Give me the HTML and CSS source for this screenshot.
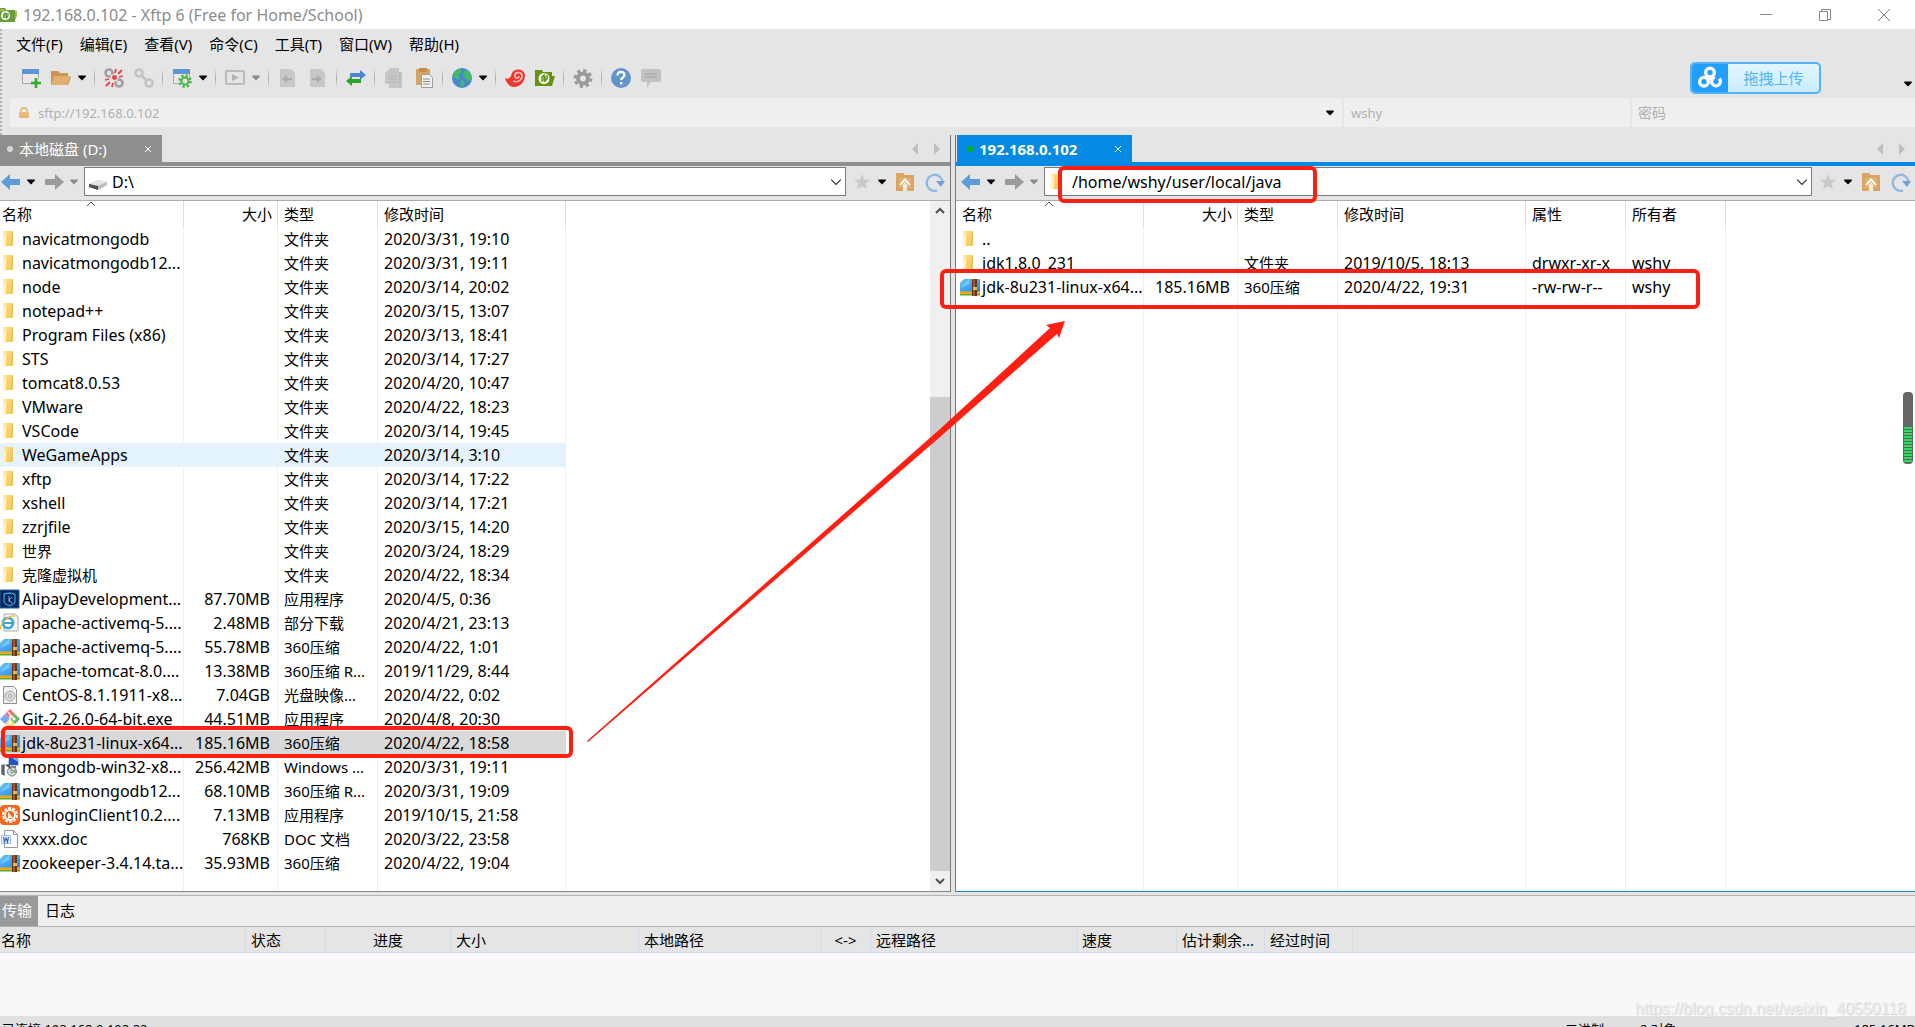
FILE: index.html
```html
<!DOCTYPE html>
<html lang="zh-CN">
<head>
<meta charset="utf-8">
<title>192.168.0.102 - Xftp 6</title>
<link rel="stylesheet" href="styles.css">
</head>
<body>
<svg class="defs" aria-hidden="true">
  <defs>
    <linearGradient id="gold" x1="0" x2="1" y1="0" y2="1"><stop offset="0" stop-color="#ffe08a"/><stop offset="1" stop-color="#f0c655"/></linearGradient>
    <linearGradient id="sky" x1="0" x2="1" y1="0" y2="1"><stop offset="0" stop-color="#6cc5fa"/><stop offset="1" stop-color="#1f87dd"/></linearGradient>
    <symbol id="i-folder" viewBox="0 0 20 20"><path d="M3 2h10v15H6z" fill="url(#gold)"/><path d="M12 3h1v13h-2z" fill="#e9c35c"/><path d="M3 2l3 3v13l-3-1.500z" fill="#fff0bd"/></symbol>
    <symbol id="i-zip" viewBox="0 0 20 20"><path d="M0 16h20v2.500H0z" fill="#58ad1e"/><path d="M0 14h20v3H0z" fill="#f4a91c"/><path d="M0 6l4-4h5l3 0 8 0v12.500H0z" fill="url(#sky)"/><path d="M0 11L9 2v5z" fill="#9adcff" opacity=".6"/><path d="M12 2h5v17h-5z" fill="#6b3216"/><path d="M13.500 2h1v17h-1z" fill="#c98b3a"/><path d="M13 10h4v3h-4z" fill="#e8b45a"/></symbol>
    <symbol id="i-alipay" viewBox="0 0 20 20"><path d="M0 1h19v18H0z" fill="#0b2550"/><path d="M0 1h19v18H0z" fill="none" stroke="#0e63b5"/><path d="M4 5l5.500-1L15 5v7c0 2-3 4-5.500 5C7 16 4 14 4 12z" fill="none" stroke="#2c9be8" stroke-width="1.300"/><path d="M9 7v6m3-5l-3 3 3 3" stroke="#5fc0ff" fill="none"/></symbol>
    <symbol id="i-ie" viewBox="0 0 20 20"><path d="M4 1h11l3 3v14H4z" fill="#f4f4f4" stroke="#aaa"/><circle cx="8" cy="10" r="5" fill="#fff" stroke="#3aa3e0" stroke-width="2.600"/><path d="M4 10h9" stroke="#3aa3e0" stroke-width="2"/><path d="M1 16C-1 12 8 2 15 3" fill="none" stroke="#f2b92e" stroke-width="1.400"/></symbol>
    <symbol id="i-iso" viewBox="0 0 20 20"><path d="M3.500 1.500h10l3 3v14h-13z" fill="#f1f1f1" stroke="#8f8f8f"/><circle cx="10" cy="11" r="5" fill="#d8d8d8" stroke="#aaa"/><circle cx="10" cy="11" r="1.500" fill="#fff" stroke="#999"/></symbol>
    <symbol id="i-git" viewBox="0 0 20 20"><path d="M10 0l5 5-5 5-5-5z" fill="#f0736b"/><path d="M5 5l5 5-5 5-5-5z" fill="#7da7f0"/><path d="M15 5l5 5-5 5-5-5z" fill="#67ba62"/><path d="M10 10l5 5-5 4-5-4z" fill="#f6dd79"/><path d="M8 3l6 7M10 6v8" stroke="#fff" stroke-width="1.300"/><circle cx="14" cy="10" r="1.500" fill="#fff"/><circle cx="10" cy="14" r="1.500" fill="#fff"/></symbol>
    <symbol id="i-msi" viewBox="0 0 20 20"><path d="M1 8l4-1v12l-4-2z" fill="#8e949b"/><path d="M3 8v10" stroke="#333"/><path d="M8 0h11v9H8z" fill="#ccd"/><path d="M9 1h9v7H9z" fill="#1a56c4"/><path d="M12 1h6v4z" fill="#68b6f5"/><path d="M11 9h5v2h-5z" fill="#777"/><circle cx="12" cy="14.500" r="4.500" fill="#cfe0dc" stroke="#778"/><path d="M12 14.500l4-3v5z" fill="#84ad6e"/><circle cx="12" cy="14.500" r="1.300" fill="#fff" stroke="#778"/><path d="M5 8l7 5-3-6z" fill="#555"/></symbol>
    <symbol id="i-sun" viewBox="0 0 20 20"><rect y="0" width="20" height="20" rx="4" fill="#f4681d"/><circle cx="10" cy="10" r="7" fill="none" stroke="#fff" stroke-width="2" stroke-dasharray="3 1.400"/><circle cx="10" cy="10" r="5" fill="none" stroke="#fff" stroke-width="1.800"/><path d="M8 7l5 6-3 0-2 1z" fill="#fff"/></symbol>
    <symbol id="i-doc" viewBox="0 0 20 20"><path d="M4.500 1.500h9l4 4v13h-13z" fill="#fff" stroke="#999"/><path d="M13.500 1.500v4h4" fill="none" stroke="#999"/><path d="M1.500 6.500h9v8h-9z" fill="#e9f1fc" stroke="#9dbdf0"/><path d="M3.500 8l1 5 1.500-4 1.500 4 1-5" fill="none" stroke="#2f66c4" stroke-width="1.200"/></symbol>
    <symbol id="i-back" viewBox="0 0 20 20"><path d="M0 10l9-8v5h10v6H9v5z" fill="#5b9dd8"/></symbol>
    <symbol id="i-fwd" viewBox="0 0 20 20"><path d="M20 10l-9-8v5H1v6h10v5z" fill="#9b9b9b"/></symbol>
    <symbol id="i-caret" viewBox="0 0 8 8"><path d="M1 2h6v1H7L4 6 1 3z" fill="currentColor"/></symbol>
    <symbol id="i-star" viewBox="0 0 20 20"><path d="M10 2l2.200 5.500 5.800.4-4.500 3.700 1.500 5.700-5-3.200-5 3.200 1.500-5.700L2 7.900l5.800-.4z" fill="#c9c9c9"/></symbol>
    <symbol id="i-up" viewBox="0 0 20 20"><path d="M1 1h7l2 2h9v16H1z" fill="#dba560"/><path d="M4 6h12v10H4z" fill="#dfb27a"/><path d="M10 6l6 7h-2l-4-4-4 4H4z" fill="#fff"/><path d="M10 10l3 4h-1v5H8v-5H7z" fill="#f7ead8"/></symbol>
    <symbol id="i-refresh" viewBox="0 0 20 20"><path d="M12 18.500A8 8 0 1 1 17.500 9" fill="none" stroke="#8fb9e2" stroke-width="2.400"/><path d="M11 9h9l-4 6z" fill="#6ba3d8"/></symbol>
    <symbol id="i-chev" viewBox="0 0 10 10"><path d="M1 3l4 4 4-4" fill="none" stroke="#333"/></symbol>
    <symbol id="i-sort" viewBox="0 0 10 6"><path d="M1 5l4-4 4 4" fill="none" stroke="#555"/></symbol>
    <symbol id="i-x" viewBox="0 0 8 8"><path d="M1 1l6 6M7 1L1 7" fill="none" stroke="#fff"/></symbol>
  </defs>
</svg>

<header class="titlebar">
  <svg class="logo" viewBox="0 0 18 16"><path d="M0 1h5l1 2h9v12H0z" fill="#6c9f3a"/><path d="M0 2h4v2H0z" fill="#93c05e"/><path d="M15 4h2v5l-2 4z" fill="#8fbf60"/><circle cx="5.500" cy="8.500" r="4.500" fill="#fff"/><path d="M3.500 11V8l1.500-2v5m1.500-5v5L8 9V6" fill="none" stroke="#5d9131" stroke-width="1.200"/></svg>
  <h1>192.168.0.102 - Xftp 6 (Free for Home/School)</h1>
  <div class="wincontrols">
    <button aria-label="最小化"><svg viewBox="0 0 12 12"><path d="M0 5.500h12"/></svg></button>
    <button aria-label="还原"><svg viewBox="0 0 12 12"><path d="M.5 2.500h8v9h-8zM2.500 2V.5h9v10H9"/></svg></button>
    <button aria-label="关闭"><svg viewBox="0 0 12 12"><path d="M0 0l12 12M12 0L0 12"/></svg></button>
  </div>
</header>

<div class="chrome">
  <nav class="menu">
    <button>文件(F)</button><button>编辑(E)</button><button>查看(V)</button><button>命令(C)</button><button>工具(T)</button><button>窗口(W)</button><button>帮助(H)</button>
  </nav>
  <div class="toolbar">
    <button aria-label="新建"><svg viewBox="0 0 20 20"><path d="M1.500 1.500h16v14h-16z" fill="#e9e9e9" stroke="#a9a9a9"/><path d="M1 1h17v5H1z" fill="#5c95d2"/><path d="M15 10v10M10 15h10" stroke="#e5e5e5" stroke-width="5"/><path d="M15 10v10M10 15h10" stroke="#2daf2a" stroke-width="2.600"/></svg></button>
    <button aria-label="打开"><svg viewBox="0 0 20 20"><path d="M0 3h7l2 2h8v4h3l-3 8H0z" fill="#c99557"/><path d="M3 8h17l-4 9H0z" fill="#dfae70"/></svg></button>
    <button class="drop" aria-label="打开列表"><svg><use href="#i-caret"/></svg></button><i class="sep tight"></i>
    <button aria-label="断开"><svg viewBox="0 0 20 20"><circle cx="5" cy="5" r="3.500" fill="none" stroke="#a0a0a0" stroke-width="2.600"/><circle cx="15" cy="15" r="3.500" fill="none" stroke="#a0a0a0" stroke-width="2.600"/><path d="M7 7l6 6" stroke="#ddd" stroke-width="3"/><path d="M12 1l-1 4M18 2l-4 4M19 8l-4 1M1 12l4-1M2 18l4-4M8 19l1-4" stroke="#ee3f49" stroke-width="1.800"/><circle cx="10.500" cy="9.500" r="2.400" fill="#ee3f49"/></svg></button>
    <button aria-label="连接"><svg viewBox="0 0 20 20" fill="none" stroke="#c2c2c2" stroke-width="2.600"><circle cx="5" cy="5" r="3.500"/><circle cx="15" cy="15" r="3.500"/><path d="M7 7l6 6"/></svg></button><i class="sep"></i>
    <button aria-label="属性"><svg viewBox="0 0 20 20"><path d="M1.500 1.500h16v14h-16z" fill="#e9e9e9" stroke="#a9a9a9"/><path d="M1 1h17v5H1z" fill="#5c95d2"/><circle cx="13" cy="13" r="6" fill="#e5e5e5"/><circle cx="13" cy="13" r="5.500" fill="none" stroke="#4bb648" stroke-width="2.600" stroke-dasharray="2.300 2"/><circle cx="13" cy="13" r="3.500" fill="none" stroke="#4bb648" stroke-width="2"/></svg></button>
    <button class="drop" aria-label="属性列表"><svg><use href="#i-caret"/></svg></button><i class="sep tight"></i>
    <button aria-label="播放"><svg viewBox="0 0 20 20"><rect x="1" y="3" width="18" height="13" rx="1" fill="none" stroke="#bababa" stroke-width="2"/><path d="M7 6l7 3.500L7 13z" fill="#b3b3b3"/></svg></button>
    <button class="drop dim" aria-label="播放列表"><svg><use href="#i-caret"/></svg></button><i class="sep tight"></i>
    <button aria-label="传入"><svg viewBox="0 0 20 20"><path d="M2 1h11l4 4v14H2z" fill="#c8c8c8"/><path d="M4 11l5-4v3h5v2H9v3z" fill="#acacac"/></svg></button>
    <button aria-label="传出"><svg viewBox="0 0 20 20"><path d="M2 1h11l4 4v14H2z" fill="#c8c8c8"/><path d="M14 11L9 7v3H4v2h5v3z" fill="#acacac"/></svg></button><i class="sep"></i>
    <button aria-label="同步"><svg viewBox="0 0 20 20"><path d="M20 7l-6-5v3H4v4h10v3z" fill="#4c87d0"/><path d="M0 13l6-5v3h9v4H6v3z" fill="#2ba32a"/></svg></button><i class="sep"></i>
    <button aria-label="复制"><svg viewBox="0 0 20 20"><path d="M6 0h9v4h3v16H5v-4H1V5z" fill="#c6c6c6"/><path d="M4 8h9M4 11h9M4 14h9M16 5v12" stroke="#b3b3b3"/></svg></button>
    <button aria-label="粘贴"><svg viewBox="0 0 20 20"><path d="M2 1h14v16H2z" fill="#d5a568"/><path d="M5 0h8v4H5z" fill="#c98c44"/><path d="M7.500 6.500h8l3 3v10h-11z" fill="#f0f0f0" stroke="#9d9d9d"/><path d="M9 11h7M9 13.500h7M9 16h7" stroke="#8f8f8f"/></svg></button><i class="sep"></i>
    <button aria-label="浏览器"><svg viewBox="0 0 20 20"><circle cx="10" cy="10" r="10" fill="#4788cc"/><path d="M2 4c3-3 7-4 8-3l-1 4-3 2 2 3-2 2-4-3zM12 3l5 0 3 7-4 4-3-4-2-3zM9 12l4 2-2 5-3-2z" fill="#43b96a"/></svg></button>
    <button class="drop" aria-label="浏览器列表"><svg><use href="#i-caret"/></svg></button><i class="sep tight"></i>
    <button aria-label="Xshell"><svg viewBox="0 0 20 20"><path d="M0 10c4 2 6-1 7-5 2-5 12-5 13 2 0 7-5 12-11 12C4 19 1 14 0 10z" fill="#f0372f"/><path d="M8 13c5 2 9-1 9-5s-6-5-7-1 4 4 4 1" fill="none" stroke="#f6d7d5" stroke-width="1.400"/></svg></button>
    <button aria-label="Xftp"><svg viewBox="0 0 20 20"><path d="M0 2h7l1 2h9v4h3l-3 10H0z" fill="#62940f"/><circle cx="9" cy="10.500" r="5.500" fill="#fff"/><path d="M7 14v-5l2-2v6m1-5v5l2-2V7" fill="none" stroke="#62940f" stroke-width="1.500"/></svg></button><i class="sep"></i>
    <button aria-label="设置"><svg viewBox="0 0 20 20" fill="none" stroke="#9a9a9a"><circle cx="10" cy="10.500" r="8" stroke-width="3" stroke-dasharray="3.300 2.980"/><circle cx="10" cy="10.500" r="5" stroke-width="4"/></svg></button><i class="sep"></i>
    <button aria-label="帮助"><svg viewBox="0 0 20 20"><circle cx="10" cy="10" r="10" fill="#6094cd"/><path d="M6.500 7.500c0-5 7-4.500 7-.5 0 2.500-3.300 2.500-3.300 5M10.200 14v2.500" fill="none" stroke="#fff" stroke-width="2.300"/></svg></button>
    <button aria-label="反馈"><svg viewBox="0 0 20 20"><path d="M2 1h16q2 0 2 2v9q0 2-2 2h-8l-4 6v-6H2q-2 0-2-2V3q0-2 2-2z" fill="#c2c2c2"/><path d="M4 6h12M4 9h12" stroke="#adadad" stroke-width="1.300"/></svg></button>
    <button class="upload"><span><svg viewBox="0 0 22 22" fill="none" stroke="#fff" stroke-width="3"><circle cx="11" cy="6" r="4"/><circle cx="5.500" cy="14.500" r="4"/><path d="M19.500 11.500a4 4 0 1 1-6 0L9 11"/></svg></span><b>拖拽上传</b></button>
    <button class="drop more" aria-label="更多"><svg><use href="#i-caret"/></svg></button>
  </div>
  <div class="address">
    <div class="field url">
      <svg class="lock" viewBox="0 0 12 12"><path d="M3 6V3q0-2 3-2t3 2v3" fill="none" stroke="#e6b877" stroke-width="1.800"/><rect x="1" y="5" width="10" height="6" rx="1" fill="#e6b877"/></svg>
      <input type="text" aria-label="地址" value="sftp://192.168.0.102">
      <button class="drop" aria-label="地址列表"><svg><use href="#i-caret"/></svg></button>
    </div>
    <input class="field user" type="text" aria-label="用户名" value="wshy">
    <input class="field pass" type="password" aria-label="密码" placeholder="密码">
  </div>
</div>

<main class="panes">
  <section class="pane local">
    <div class="tabs">
      <button class="tab"><i class="dot"></i><span>本地磁盘 (D:)</span><svg><use href="#i-x"/></svg></button>
      <div class="pager"><svg viewBox="0 0 8 12"><path d="M7 0v12L1 6z"/></svg><svg viewBox="0 0 8 12"><path d="M1 0v12l6-6z"/></svg></div>
    </div>
    <div class="pathbar">
      <button class="ico" aria-label="后退"><svg><use href="#i-back"/></svg></button><button class="drop" aria-label="后退列表"><svg><use href="#i-caret"/></svg></button>
      <button class="ico" aria-label="前进"><svg><use href="#i-fwd"/></svg></button><button class="drop dim" aria-label="前进列表"><svg><use href="#i-caret"/></svg></button>
      <div class="path">
        <svg class="pathicon" viewBox="0 0 20 20"><path d="M1 12l9-4 9 2v3l-9 5-9-3z" fill="#b9bcbe"/><path d="M1 12l9-4 9 2-9 4z" fill="#e3e5e6"/><path d="M1 12l9 2v4l-9-3z" fill="#4d5458"/></svg>
        <input type="text" aria-label="本地路径" value="D:\">
        <button aria-label="路径列表"><svg><use href="#i-chev"/></svg></button>
      </div>
      <button class="ico fav" aria-label="收藏"><svg><use href="#i-star"/></svg></button><button class="drop" aria-label="收藏列表"><svg><use href="#i-caret"/></svg></button>
      <button class="ico up" aria-label="上一级"><svg><use href="#i-up"/></svg></button>
      <button class="ico re" aria-label="刷新"><svg><use href="#i-refresh"/></svg></button>
    </div>
    <div class="list">
      <div class="lines"><i></i><i></i><i></i><i></i></div>
      <table>
        <colgroup><col class="c-name"><col class="c-size"><col class="c-type"><col class="c-date"></colgroup>
        <thead><tr><th>名称<svg class="sort"><use href="#i-sort"/></svg></th><th>大小</th><th>类型</th><th>修改时间</th></tr></thead>
        <tbody>
          <tr><td><svg><use href="#i-folder"/></svg>navicatmongodb</td><td></td><td>文件夹</td><td>2020/3/31, 19:10</td></tr>
          <tr><td><svg><use href="#i-folder"/></svg>navicatmongodb12...</td><td></td><td>文件夹</td><td>2020/3/31, 19:11</td></tr>
          <tr><td><svg><use href="#i-folder"/></svg>node</td><td></td><td>文件夹</td><td>2020/3/14, 20:02</td></tr>
          <tr><td><svg><use href="#i-folder"/></svg>notepad++</td><td></td><td>文件夹</td><td>2020/3/15, 13:07</td></tr>
          <tr><td><svg><use href="#i-folder"/></svg>Program Files (x86)</td><td></td><td>文件夹</td><td>2020/3/13, 18:41</td></tr>
          <tr><td><svg><use href="#i-folder"/></svg>STS</td><td></td><td>文件夹</td><td>2020/3/14, 17:27</td></tr>
          <tr><td><svg><use href="#i-folder"/></svg>tomcat8.0.53</td><td></td><td>文件夹</td><td>2020/4/20, 10:47</td></tr>
          <tr><td><svg><use href="#i-folder"/></svg>VMware</td><td></td><td>文件夹</td><td>2020/4/22, 18:23</td></tr>
          <tr><td><svg><use href="#i-folder"/></svg>VSCode</td><td></td><td>文件夹</td><td>2020/3/14, 19:45</td></tr>
          <tr class="hover"><td><svg><use href="#i-folder"/></svg>WeGameApps</td><td></td><td>文件夹</td><td>2020/3/14, 3:10</td></tr>
          <tr><td><svg><use href="#i-folder"/></svg>xftp</td><td></td><td>文件夹</td><td>2020/3/14, 17:22</td></tr>
          <tr><td><svg><use href="#i-folder"/></svg>xshell</td><td></td><td>文件夹</td><td>2020/3/14, 17:21</td></tr>
          <tr><td><svg><use href="#i-folder"/></svg>zzrjfile</td><td></td><td>文件夹</td><td>2020/3/15, 14:20</td></tr>
          <tr><td class="han"><svg><use href="#i-folder"/></svg>世界</td><td></td><td>文件夹</td><td>2020/3/24, 18:29</td></tr>
          <tr><td class="han"><svg><use href="#i-folder"/></svg>克隆虚拟机</td><td></td><td>文件夹</td><td>2020/4/22, 18:34</td></tr>
          <tr><td><svg><use href="#i-alipay"/></svg>AlipayDevelopment...</td><td>87.70MB</td><td>应用程序</td><td>2020/4/5, 0:36</td></tr>
          <tr><td><svg><use href="#i-ie"/></svg>apache-activemq-5....</td><td>2.48MB</td><td>部分下载</td><td>2020/4/21, 23:13</td></tr>
          <tr><td><svg><use href="#i-zip"/></svg>apache-activemq-5....</td><td>55.78MB</td><td>360压缩</td><td>2020/4/22, 1:01</td></tr>
          <tr><td><svg><use href="#i-zip"/></svg>apache-tomcat-8.0....</td><td>13.38MB</td><td>360压缩 R...</td><td>2019/11/29, 8:44</td></tr>
          <tr><td><svg><use href="#i-iso"/></svg>CentOS-8.1.1911-x8...</td><td>7.04GB</td><td>光盘映像...</td><td>2020/4/22, 0:02</td></tr>
          <tr><td><svg><use href="#i-git"/></svg>Git-2.26.0-64-bit.exe</td><td>44.51MB</td><td>应用程序</td><td>2020/4/8, 20:30</td></tr>
          <tr class="selected"><td><svg><use href="#i-zip"/></svg>jdk-8u231-linux-x64...</td><td>185.16MB</td><td>360压缩</td><td>2020/4/22, 18:58</td></tr>
          <tr><td><svg><use href="#i-msi"/></svg>mongodb-win32-x8...</td><td>256.42MB</td><td>Windows ...</td><td>2020/3/31, 19:11</td></tr>
          <tr><td><svg><use href="#i-zip"/></svg>navicatmongodb12...</td><td>68.10MB</td><td>360压缩 R...</td><td>2020/3/31, 19:09</td></tr>
          <tr><td><svg><use href="#i-sun"/></svg>SunloginClient10.2....</td><td>7.13MB</td><td>应用程序</td><td>2019/10/15, 21:58</td></tr>
          <tr><td><svg><use href="#i-doc"/></svg>xxxx.doc</td><td>768KB</td><td>DOC 文档</td><td>2020/3/22, 23:58</td></tr>
          <tr><td><svg><use href="#i-zip"/></svg>zookeeper-3.4.14.ta...</td><td>35.93MB</td><td>360压缩</td><td>2020/4/22, 19:04</td></tr>
        </tbody>
      </table>
      <div class="scrollbar">
        <svg viewBox="0 0 10 10"><path d="M1 7l4-4 4 4" fill="none" stroke="#505050" stroke-width="2"/></svg>
        <div class="track"><div class="thumb"></div></div>
        <svg viewBox="0 0 10 10"><path d="M1 3l4 4 4-4" fill="none" stroke="#505050" stroke-width="2"/></svg>
      </div>
    </div>
  </section>

  <section class="pane remote">
    <div class="tabs">
      <button class="tab"><i class="dot"></i><span>192.168.0.102</span><svg><use href="#i-x"/></svg></button>
      <div class="pager"><svg viewBox="0 0 8 12"><path d="M7 0v12L1 6z"/></svg><svg viewBox="0 0 8 12"><path d="M1 0v12l6-6z"/></svg></div>
    </div>
    <div class="pathbar">
      <button class="ico" aria-label="后退"><svg><use href="#i-back"/></svg></button><button class="drop" aria-label="后退列表"><svg><use href="#i-caret"/></svg></button>
      <button class="ico" aria-label="前进"><svg><use href="#i-fwd"/></svg></button><button class="drop dim" aria-label="前进列表"><svg><use href="#i-caret"/></svg></button>
      <div class="path">
        <svg class="pathicon"><use href="#i-folder"/></svg>
        <input type="text" aria-label="远程路径" value="/home/wshy/user/local/java">
        <button aria-label="路径列表"><svg><use href="#i-chev"/></svg></button>
      </div>
      <button class="ico fav" aria-label="收藏"><svg><use href="#i-star"/></svg></button><button class="drop" aria-label="收藏列表"><svg><use href="#i-caret"/></svg></button>
      <button class="ico up" aria-label="上一级"><svg><use href="#i-up"/></svg></button>
      <button class="ico re" aria-label="刷新"><svg><use href="#i-refresh"/></svg></button>
    </div>
    <div class="list">
      <div class="lines"><i></i><i></i><i></i><i></i><i></i><i></i></div>
      <table>
        <colgroup><col class="c-name"><col class="c-size"><col class="c-type"><col class="c-date"><col class="c-attr"><col class="c-attr"></colgroup>
        <thead><tr><th>名称<svg class="sort"><use href="#i-sort"/></svg></th><th>大小</th><th>类型</th><th>修改时间</th><th>属性</th><th>所有者</th></tr></thead>
        <tbody>
          <tr><td><svg><use href="#i-folder"/></svg>..</td><td></td><td></td><td></td><td></td><td></td></tr>
          <tr><td><svg><use href="#i-folder"/></svg>jdk1.8.0_231</td><td></td><td>文件夹</td><td>2019/10/5, 18:13</td><td>drwxr-xr-x</td><td>wshy</td></tr>
          <tr><td><svg><use href="#i-zip"/></svg>jdk-8u231-linux-x64...</td><td>185.16MB</td><td>360压缩</td><td>2020/4/22, 19:31</td><td>-rw-rw-r--</td><td>wshy</td></tr>
        </tbody>
      </table>
    </div>
  </section>
</main>

<section class="transfer">
  <div class="subtabs"><button class="on">传输</button><button>日志</button></div>
  <table>
    <colgroup><col class="t-name"><col class="t-state"><col class="t-prog"><col class="t-size"><col class="t-local"><col class="t-dir"><col class="t-remote"><col class="t-speed"><col class="t-left"><col class="t-left"><col></colgroup>
    <thead><tr><th>名称</th><th>状态</th><th class="mid">进度</th><th>大小</th><th>本地路径</th><th class="mid">&lt;-&gt;</th><th>远程路径</th><th>速度</th><th>估计剩余...</th><th>经过时间</th><th></th></tr></thead>
  </table>
  <div class="empty"></div>
</section>

<footer class="status"><span>已连接 192.168.0.102:22</span><span class="mode">二进制</span><span class="count">2 对象</span><span class="total">185.16MB</span></footer>

<div class="gauge"><i></i></div>
<div class="watermark">https://blog.csdn.net/weixin_40550118</div>
<svg class="marks" aria-hidden="true">
  <g fill="none" stroke="#fe1f12" stroke-width="4">
    <rect x="1060" y="168" width="255" height="33" rx="4"/>
    <rect x="942" y="271" width="756" height="36" rx="4"/>
    <rect x="3" y="728" width="568" height="28" rx="4"/>
  </g>
  <path d="M587 741L940 429 1050 328 1046 325 1065 321 1059 338 1057 334 940 437 588 742z" fill="#fe1f12"/>
</svg>
</body>
</html>
```
FILE: styles.css
```css
* { box-sizing: border-box; }
html { overflow: hidden; }
body {
  margin: 0;
  height: 100vh;
  overflow: hidden;
  position: relative;
  background: #e5e5e5;
  color: #000;
  font: 15px/24px "Noto Sans", "Noto Sans CJK SC", sans-serif;
}
.defs { position: absolute; width: 0; height: 0; }
button, input { margin: 0; padding: 0; border: 0; background: none; color: inherit; font: inherit; }
input { min-width: 0; outline: 0; }
svg { display: block; }

.titlebar { display: flex; align-items: center; height: 29px; background: #fff; color: #8c8c8c; }
.logo { width: 18px; height: 16px; }
h1 { margin: 0 0 0 5px; font-size: 16px; font-weight: 400; }
.wincontrols { display: flex; margin-left: auto; padding-right: 2px; }
.wincontrols button { display: grid; place-items: center; width: 59px; height: 29px; }
.wincontrols svg { width: 12px; height: 12px; fill: none; stroke: #858585; }

.chrome { background: #e5e5e5; border-left: 2px dotted #b4b4b4; }
.menu { display: flex; gap: 17px; height: 32px; padding: 3px 0 0 14px; }
.menu button { height: 24px; }
.toolbar { display: flex; align-items: center; height: 37px; padding: 0 0 4px 19px; }
.toolbar button { width: 20px; height: 20px; }
.toolbar button + button { margin-left: 10px; }
.toolbar button svg { width: 20px; height: 20px; }
.toolbar button.drop { width: 20px; margin-left: 1px; }
.sep { width: 18px; height: 18px; background: linear-gradient(#e0e0e0, #a8a8a8, #e0e0e0) 8px 0 / 1px 100% no-repeat; }
.sep.tight { width: 12px; background-position: 2px 0; }
.drop { display: grid; place-items: center; width: 20px; height: 20px; flex: none; color: #000; }
.drop svg, .toolbar .drop svg { width: 10px; height: 10px; }
.dim { color: #8b8b8b; }
.toolbar button.upload {
  display: flex; width: 131px; height: 32px; margin-left: auto; overflow: hidden;
  border: 2px solid #53b3fb; border-radius: 5px; background: linear-gradient(#e2f6ff, #c9ecff); color: #54b5fb;
}
.upload span { display: grid; place-items: center; width: 36px; height: 28px; background: #229ffd; }
.toolbar .upload svg { width: 24px; height: 24px; }
.upload b { flex: 1; line-height: 28px; font-weight: 400; text-align: center; }
.toolbar button.more { align-self: flex-end; width: 14px; margin-left: 80px; }
.address { display: flex; gap: 2px; padding: 0 0 8px 8px; color: #b0b0b0; font-size: 13px; }
.field { height: 29px; background: #efefef; }
.url { display: flex; align-items: center; flex: 1332 1332 1332px; padding-left: 8px; }
.url input { flex: 1; height: 29px; margin-left: 8px; }
.url .drop { margin-right: 2px; }
.lock { width: 12px; height: 12px; }
.user { flex: 286 286 286px; padding-left: 7px; }
.pass { flex: 283 283 283px; padding-left: 6px; }
.pass::placeholder { color: #b0b0b0; font-size: 14px; }

.panes { display: flex; border-bottom: 3px solid #e5e5e5; }
.pane { display: flex; flex-direction: column; min-width: 0; border-right: 1px solid #777; }
.local { flex: 951; }
.remote { flex: 960; margin-left: 4px; border-left: 1px solid #777; border-right: 0; }
.tabs { display: flex; align-items: flex-start; height: 31px; border-bottom: 4px solid #8e8e8c; }
.tab { display: flex; align-items: center; width: 162px; height: 28px; padding: 0 10px 0 7px; background: #8e8e8c; color: #fff; }
.tab span { margin: 0 auto 0 6px; }
.tab svg { width: 8px; height: 8px; }
.dot { width: 6px; height: 6px; border-radius: 3px; background: #d8d8d8; }
.remote .tabs { border-color: #048ae3; }
.remote .tab { width: 175px; margin-left: 1px; padding-left: 10px; background: #048ae3; font-weight: 700; }
.remote .dot { background: #10b010; }
.pager { display: flex; gap: 14px; margin: 8px 9px 0 auto; }
.pager svg { width: 8px; height: 12px; fill: #bfbfbf; }
.pathbar { display: flex; align-items: center; height: 35px; padding: 0 5px 3px 1px; border-bottom: 1px solid #acacac; }
.remote .pathbar { padding-left: 5px; padding-right: 4px; }
.pathbar svg { width: 20px; height: 20px; }
.pathbar .drop svg { width: 10px; height: 10px; }
.ico { flex: none; width: 20px; height: 20px; }
.pathbar .drop + .ico { margin-left: 3px; }
.pathbar .fav { margin-left: 6px; }
.path { display: flex; align-items: center; flex: 1; height: 29px; border: 1px solid #7a7a7a; background: #fff; }
.path .pathicon { margin: 0 4px 0 3px; }
.path input { flex: 1; height: 27px; font-size: 16px; }
.path button { width: 20px; }
.path button svg { width: 12px; height: 12px; margin-left: auto; margin-right: 3px; }
.pathbar .re { margin-left: 10px; }

.list { flex: 1; display: grid; grid-template-columns: 1fr 20px; background: #fff; border-bottom: 1px solid #83838b; }
.remote .list { grid-template-columns: 1fr; border-bottom-color: #2088cd; }
.lines, .list table { grid-area: 1 / 1; }
.lines { display: flex; }
.lines i { width: 100px; border-right: 1px solid #e5f1fb; }
.lines i:nth-child(1) { width: 184px; }
.lines i:nth-child(2) { width: 94px; }
.lines i:nth-child(4) { width: 188px; }
.remote .lines i:nth-child(1) { width: 188px; }
.list table { position: relative; z-index: 1; align-self: start; width: 566px; margin-bottom: 16px; table-layout: fixed; border-spacing: 0; }
.remote .list table { width: 770px; }
.c-name { width: 184px; }
.remote .c-name { width: 188px; }
.c-size { width: 94px; }
.c-type, .c-attr { width: 100px; }
.c-date { width: 188px; }
th, td { padding: 0 0 0 6px; overflow: hidden; font-weight: 400; text-align: left; white-space: nowrap; }
.list th { position: relative; height: 26px; border-right: 1px solid #e0e0e0; line-height: 26px; }
.list th:first-child { padding-left: 2px; }
.remote .list th:first-child { padding-left: 6px; }
.list th:nth-child(2) { padding-right: 5px; text-align: right; }
.sort { position: absolute; top: 0; left: calc(50% - 6px); width: 10px; height: 6px; }
.list td { height: 24px; font-size: 16px; }
.list td:nth-child(3), .list td.han { font-size: 15px; }
.list td:first-child { padding-left: 0; }
.remote .list td:first-child { padding-left: 4px; }
.list td:first-child svg { float: left; width: 20px; height: 20px; margin: 2px 2px 2px 0; }
.list td:nth-child(2) { padding-right: 8px; text-align: right; }
.hover { background: #e5f3ff; }
.selected { background: #d9d9d9; }
.scrollbar { grid-area: 1 / 2; display: flex; flex-direction: column; align-items: center; background: #f0f0f0; }
.scrollbar svg { width: 10px; height: 20px; }
.track { flex: 1; display: flex; flex-direction: column; justify-content: flex-end; width: 100%; }
.thumb { height: 73%; background: #cdcdcd; }

.transfer { border-top: 1px solid #b4b4b4; background: #f8f8f8; }
.subtabs { display: flex; height: 31px; background: #efefef; border-bottom: 1px solid #b4b4b4; }
.subtabs button { padding: 0 7px 2px; }
.subtabs .on { width: 38px; padding: 0 4px 2px 0; background: #999; color: #fff; }
.transfer table { width: 100%; table-layout: fixed; border-spacing: 0; background: #e5e5e5; border-bottom: 1px solid #cfdbea; }
.transfer th { height: 25px; padding-left: 5px; border-right: 1px solid #d2dce8; }
.transfer th:first-child { padding-left: 1px; }
.transfer th:last-child { border: 0; }
.transfer th.mid { padding: 0; text-align: center; }
.t-name { width: 246px; }
.t-state { width: 80px; }
.t-prog { width: 125px; }
.t-size { width: 188px; }
.t-local { width: 182px; }
.t-dir { width: 50px; }
.t-remote { width: 206px; }
.t-speed { width: 100px; }
.t-left { width: 88px; }
.empty { height: 63px; }
.status { display: flex; height: 32px; padding: 1px 0 0 2px; background: #e0e0e0; font-size: 13px; }
.mode { width: 75px; margin-left: auto; }
.count { width: 214px; }
.total { width: 61px; }

.gauge { position: absolute; right: 2px; top: 392px; display: flex; flex-direction: column; justify-content: flex-end; width: 10px; height: 72px; padding: 1px; border-radius: 4px; background: #666; }
.gauge i { height: 36px; border-radius: 0 0 3px 3px; background: repeating-linear-gradient(#2fdc60 0 2px, #4b6f52 2px 3px); }
.watermark { position: absolute; right: 9px; bottom: 6px; color: #ececec; font: 16px/24px "Liberation Sans", sans-serif; text-shadow: 1px 1px 1px #d0d0d0; }
.marks { position: absolute; inset: 0; width: 100%; height: 100%; z-index: 2; pointer-events: none; }
```
